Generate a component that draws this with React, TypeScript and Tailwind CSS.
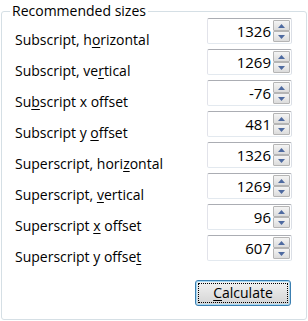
import React from 'react'

type Row = { pre: string; key: string; post: string; value: string }

const rows: Row[] = [
  { pre: 'Subscript, h', key: 'o', post: 'rizontal', value: '1326' },
  { pre: 'Subscript, ve', key: 'r', post: 'tical', value: '1269' },
  { pre: 'Su', key: 'b', post: 'script x offset', value: '-76' },
  { pre: 'Subscript y ', key: 'o', post: 'ffset', value: '481' },
  { pre: 'Superscript, hori', key: 'z', post: 'ontal', value: '1326' },
  { pre: 'Superscript, ', key: 'v', post: 'ertical', value: '1269' },
  { pre: 'Superscript ', key: 'x', post: ' offset', value: '96' },
  { pre: 'Superscript y offse', key: 't', post: '', value: '607' },
]

function Arrow({ up }: { up?: boolean }) {
  return (
    <svg width="7" height="4" viewBox="0 0 7 4" className="block">
      {up ? <path d="M0 4 L3.5 0 L7 4 Z" fill="#4e6aa0" /> : <path d="M0 0 L3.5 4 L7 0 Z" fill="#4e6aa0" />}
    </svg>
  )
}

function Spinner({ value }: { value: string }) {
  return (
    <div className="flex h-[26px] w-[85px] rounded-[2px] border border-[#abadb3] border-l-[#e2e3ea] border-r-[#dbdfe6] border-b-[#e3e9ef] bg-white">
      <div className="flex-1 pr-[2px] text-right text-[15px] leading-[24px] text-black">{value}</div>
      <div className="flex w-[18px] flex-col py-[1px] pr-[1px]">
        <div className="flex flex-1 items-center justify-center rounded-[1px] border border-[#b5b5b5] bg-gradient-to-b from-[#f4f4f4] to-[#dcdcdc]">
          <Arrow up />
        </div>
        <div className="flex flex-1 items-center justify-center rounded-[1px] border border-[#b5b5b5] bg-gradient-to-b from-[#f4f4f4] to-[#dcdcdc]">
          <Arrow />
        </div>
      </div>
    </div>
  )
}

export default function App() {
  return (
    <div className="h-[321px] w-[308px] bg-white pl-[1px] text-black" style={{ fontFamily: '"Open Sans", "Noto Sans", sans-serif' }}>
      <fieldset className="h-[320px] w-[306px] rounded-[3px] border border-[#d5dfe5]">
        <legend className="ml-[8px] px-[2px] text-[14px] leading-[22px]">Recommended sizes</legend>
        <div className="-mt-[4px] flex flex-col pl-[13px] pr-[14px]">
          {rows.map((r) => (
            <div key={r.pre + r.post} className="flex h-[31px] items-start justify-between">
              <div className="pt-[12px] text-[14px] leading-[20px]">
                {r.pre}
                <span className="underline underline-offset-2">{r.key}</span>
                {r.post}
              </div>
              <Spinner value={r.value} />
            </div>
          ))}
          <div className="mt-[14px] flex justify-end pr-[1px]">
            <button className="h-[26px] w-[96px] rounded-[3px] border border-[#3c7fb1] bg-gradient-to-b from-[#f2f2f2] to-[#d4d4d4] p-[2px] shadow-[inset_0_0_0_1px_#a8dbf6]">
              <div className="flex h-full items-center justify-center border border-dotted border-black text-[14px] leading-[18px]">
                <span className="underline underline-offset-2">C</span>alculate
              </div>
            </button>
          </div>
        </div>
      </fieldset>
    </div>
  )
}
